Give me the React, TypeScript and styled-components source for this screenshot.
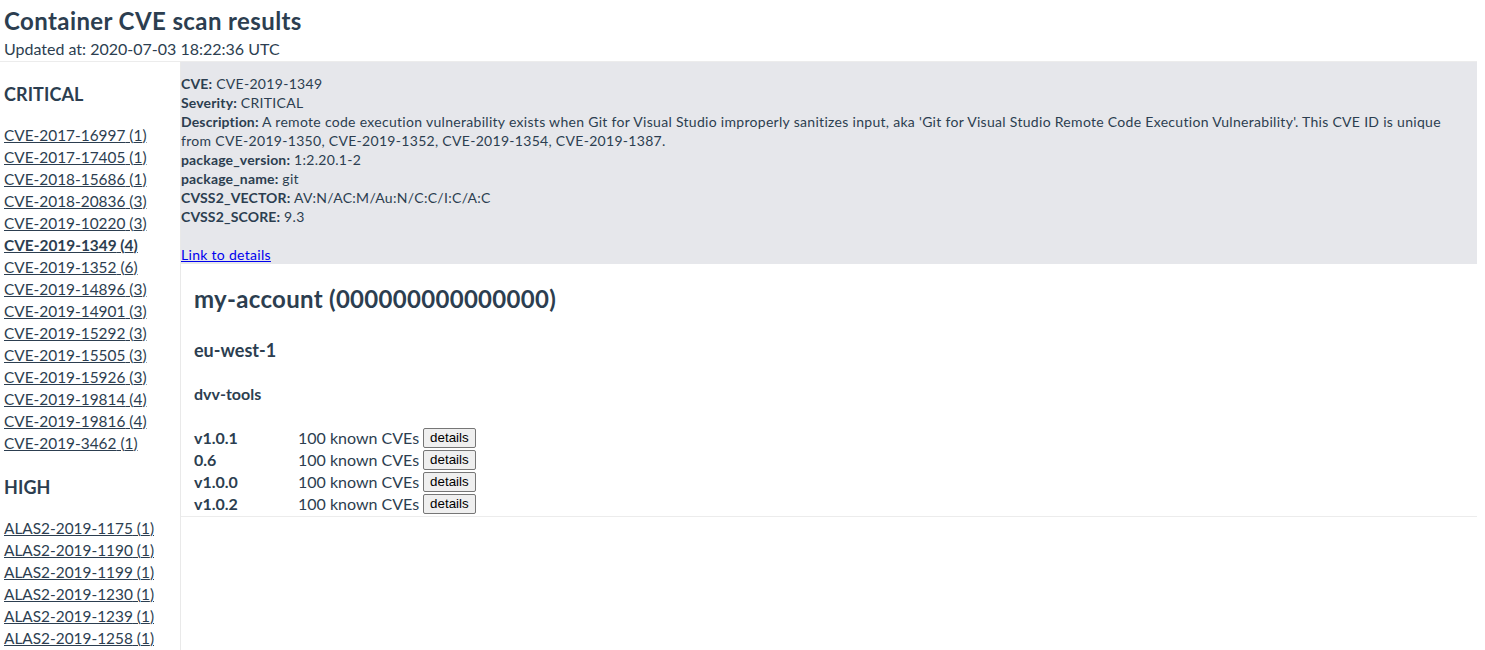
import React from "react";
import styled, { createGlobalStyle } from "styled-components";

const GlobalStyle = createGlobalStyle`
  html, body { margin: 0; padding: 0; background: #ffffff; }
  body {
    font-family: Lato, "Noto Sans", Arial, sans-serif;
    color: #2c3e50;
    -webkit-font-smoothing: antialiased;
  }
`;

const Page = styled.div`
  display: flex;
  flex-direction: column;
  padding: 0 8px 0 4px;
`;

const Header = styled.header`
  display: flex;
  flex-direction: column;
  padding-top: 8px;
  border-bottom: 1px solid #ececec;
  margin-left: -4px;
  padding-left: 4px;
`;

const Title = styled.h1`
  margin: 0;
  font-size: 24px;
  line-height: 26px;
  letter-spacing: 0.4px;
  font-weight: 700;
`;

const Subtitle = styled.div`
  font-size: 16px;
  line-height: 22px;
  margin-top: 4px;
  padding-bottom: 1px;
`;

const Body = styled.div`
  display: flex;
  align-items: flex-start;
`;

const Sidebar = styled.nav`
  width: 176px;
  flex-shrink: 0;
  border-right: 1px solid #e9e9e9;
  padding-top: 21px;
  min-height: 600px;
`;

const SeverityTitle = styled.h3`
  margin: 0 0 19px;
  font-size: 18px;
  line-height: 22px;
  letter-spacing: 0.1px;
  font-weight: 700;
`;

const Section = styled.section`
  margin-bottom: 22px;
`;

const CveLink = styled.a<{ $active?: boolean }>`
  display: block;
  font-size: 15.4px;
  line-height: 22px;
  color: #2c3e50;
  text-decoration: underline;
  font-weight: ${(p) => (p.$active ? 700 : 400)};
  cursor: pointer;
  white-space: nowrap;
`;

const Main = styled.main`
  flex: 1;
  display: flex;
  flex-direction: column;
`;

const DetailPanel = styled.div`
  background: #e6e7eb;
  padding: 12px 24px 0 0;
  font-size: 14px;
  line-height: 19px;
  letter-spacing: 0.3px;
`;

const Field = styled.div``;

const Label = styled.b`
  font-weight: 700;
  letter-spacing: 0.15px;
`;

const DetailsLink = styled.a`
  display: inline-block;
  margin-top: 19px;
  color: #0000ee;
  text-decoration: underline;
`;

const Account = styled.section`
  padding: 20px 13px 0;
  border-bottom: 1px solid #ececec;
`;

const AccountTitle = styled.h2`
  margin: 0;
  font-size: 24px;
  line-height: 30px;
  letter-spacing: 0.3px;
  font-weight: 700;
`;

const RegionTitle = styled.h3`
  margin: 25px 0 0;
  font-size: 18px;
  line-height: 22px;
  font-weight: 700;
`;

const RepoTitle = styled.h4`
  margin: 22px 0 0;
  font-size: 16px;
  line-height: 22px;
  font-weight: 700;
`;

const ImageTable = styled.div`
  display: grid;
  grid-template-columns: 104px auto;
  justify-content: start;
  margin-top: 22px;
  padding-bottom: 1px;
`;

const Version = styled.div`
  font-size: 16px;
  line-height: 22px;
  font-weight: 700;
`;

const CveCount = styled.div`
  font-size: 16px;
  line-height: 22px;
  display: flex;
  align-items: center;
  gap: 4px;
`;

const DetailsButton = styled.button`
  font-family: Arial, "Liberation Sans", sans-serif;
  font-size: 13.33px;
  line-height: 16px;
  padding: 1px 6px;
  background: #efefef;
  border: 1px solid #767676;
  border-radius: 2px;
  color: #000;
  height: 20px;
`;

const critical: [string, number][] = [
  ["CVE-2017-16997", 1],
  ["CVE-2017-17405", 1],
  ["CVE-2018-15686", 1],
  ["CVE-2018-20836", 3],
  ["CVE-2019-10220", 3],
  ["CVE-2019-1349", 4],
  ["CVE-2019-1352", 6],
  ["CVE-2019-14896", 3],
  ["CVE-2019-14901", 3],
  ["CVE-2019-15292", 3],
  ["CVE-2019-15505", 3],
  ["CVE-2019-15926", 3],
  ["CVE-2019-19814", 4],
  ["CVE-2019-19816", 4],
  ["CVE-2019-3462", 1],
];

const high: [string, number][] = [
  ["ALAS2-2019-1175", 1],
  ["ALAS2-2019-1190", 1],
  ["ALAS2-2019-1199", 1],
  ["ALAS2-2019-1230", 1],
  ["ALAS2-2019-1239", 1],
  ["ALAS2-2019-1258", 1],
  ["ALAS2-2019-1264", 1],
  ["ALAS2-2019-1271", 1],
];

const images = ["v1.0.1", "0.6", "v1.0.0", "v1.0.2"];

export default function App() {
  return (
    <>
      <GlobalStyle />
      <Page>
        <Header>
          <Title>Container CVE scan results</Title>
          <Subtitle>Updated at: 2020-07-03 18:22:36 UTC</Subtitle>
        </Header>
        <Body>
          <Sidebar>
            <Section>
              <SeverityTitle>CRITICAL</SeverityTitle>
              {critical.map(([id, n]) => (
                <CveLink key={id} $active={id === "CVE-2019-1349"}>
                  {id} ({n})
                </CveLink>
              ))}
            </Section>
            <Section>
              <SeverityTitle>HIGH</SeverityTitle>
              {high.map(([id, n]) => (
                <CveLink key={id}>
                  {id} ({n})
                </CveLink>
              ))}
            </Section>
          </Sidebar>
          <Main>
            <DetailPanel>
              <Field>
                <Label>CVE:</Label> CVE-2019-1349
              </Field>
              <Field>
                <Label>Severity:</Label> CRITICAL
              </Field>
              <Field>
                <Label>Description:</Label> A remote code execution vulnerability exists when Git for
                Visual Studio improperly sanitizes input, aka 'Git for Visual Studio Remote Code
                Execution Vulnerability'. This CVE ID is unique from CVE-2019-1350, CVE-2019-1352,
                CVE-2019-1354, CVE-2019-1387.
              </Field>
              <Field>
                <Label>package_version:</Label> 1:2.20.1-2
              </Field>
              <Field>
                <Label>package_name:</Label> git
              </Field>
              <Field>
                <Label>CVSS2_VECTOR:</Label> AV:N/AC:M/Au:N/C:C/I:C/A:C
              </Field>
              <Field>
                <Label>CVSS2_SCORE:</Label> 9.3
              </Field>
              <DetailsLink href="#">Link to details</DetailsLink>
            </DetailPanel>
            <Account>
              <AccountTitle>my-account (000000000000000)</AccountTitle>
              <RegionTitle>eu-west-1</RegionTitle>
              <RepoTitle>dvv-tools</RepoTitle>
              <ImageTable>
                {images.map((v) => (
                  <React.Fragment key={v}>
                    <Version>{v}</Version>
                    <CveCount>
                      100 known CVEs <DetailsButton>details</DetailsButton>
                    </CveCount>
                  </React.Fragment>
                ))}
              </ImageTable>
            </Account>
          </Main>
        </Body>
      </Page>
    </>
  );
}
